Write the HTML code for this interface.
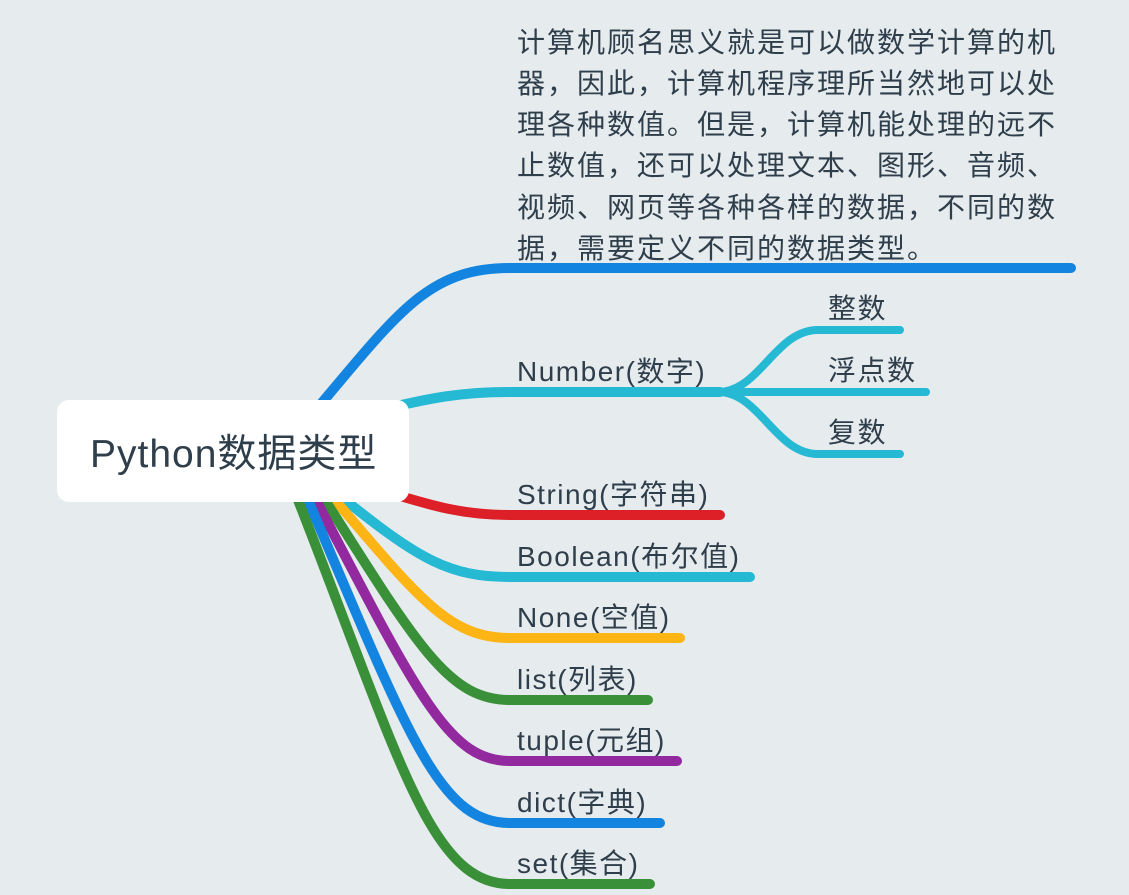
<!DOCTYPE html>
<html><head><meta charset="utf-8"><style>
html,body{margin:0;padding:0;background:#e6ebee;}
svg{display:block;}
text{font-family:"Liberation Sans","Noto Sans CJK SC",sans-serif;fill:#2f3e4b;}
</style></head><body>
<svg width="1129" height="895" viewBox="0 0 1129 895" xmlns="http://www.w3.org/2000/svg">
<rect width="1129" height="895" fill="#e6ebee"/>
<g fill="none" stroke-linecap="round" stroke-width="10">
<path d="M320,405 C400,310 430,268 510,268 L1071,268" stroke="#1385e0"/>
<path d="M380,410 C430,398 460,392 510,392 L720,392" stroke="#25b9d3"/>
<path d="M380,490 C430,505 460,515 510,515 L720,515" stroke="#dd2027"/>
<path d="M345,500 C420,560 450,577 510,577 L750,577" stroke="#25b9d3"/>
<path d="M335,500 C420,600 450,638 510,638 L680,638" stroke="#fdb515"/>
<path d="M325,500 C420,650 450,700 510,700 L648,700" stroke="#3a9038"/>
<path d="M316,500 C420,700 450,761 510,761 L677,761" stroke="#93299f"/>
<path d="M308,500 C410,740 440,823 510,823 L660,823" stroke="#1385e0"/>
<path d="M298,500 C400,760 430,884 510,884 L650,884" stroke="#3a9038"/>
</g>
<g fill="none" stroke-linecap="round" stroke-width="8" stroke="#25b9d3">
<path d="M718,392 C760,392 775,330 818,330 L900,330"/>
<path d="M718,392 L926,392"/>
<path d="M718,392 C760,392 775,454 818,454 L900,454"/>
</g>
<rect x="57" y="400" width="352" height="102" rx="12" fill="#ffffff"/>
<text x="90" y="467" font-size="39" letter-spacing="1">Python数据类型</text>
<g font-size="28" letter-spacing="2">
<text x="517" y="52">计算机顾名思义就是可以做数学计算的机</text>
<text x="517" y="93">器，因此，计算机程序理所当然地可以处</text>
<text x="517" y="134">理各种数值。但是，计算机能处理的远不</text>
<text x="517" y="175">止数值，还可以处理文本、图形、音频、</text>
<text x="517" y="217">视频、网页等各种各样的数据，不同的数</text>
<text x="517" y="258">据，需要定义不同的数据类型。</text>
</g>
<g font-size="28" letter-spacing="1.5">
<text x="517" y="381">Number(数字)</text>
<text x="517" y="504">String(字符串)</text>
<text x="517" y="566">Boolean(布尔值)</text>
<text x="517" y="627">None(空值)</text>
<text x="517" y="689">list(列表)</text>
<text x="517" y="750">tuple(元组)</text>
<text x="517" y="812">dict(字典)</text>
<text x="517" y="873">set(集合)</text>
<text x="828" y="318">整数</text>
<text x="828" y="380">浮点数</text>
<text x="828" y="442">复数</text>
</g>
</svg>
</body></html>
